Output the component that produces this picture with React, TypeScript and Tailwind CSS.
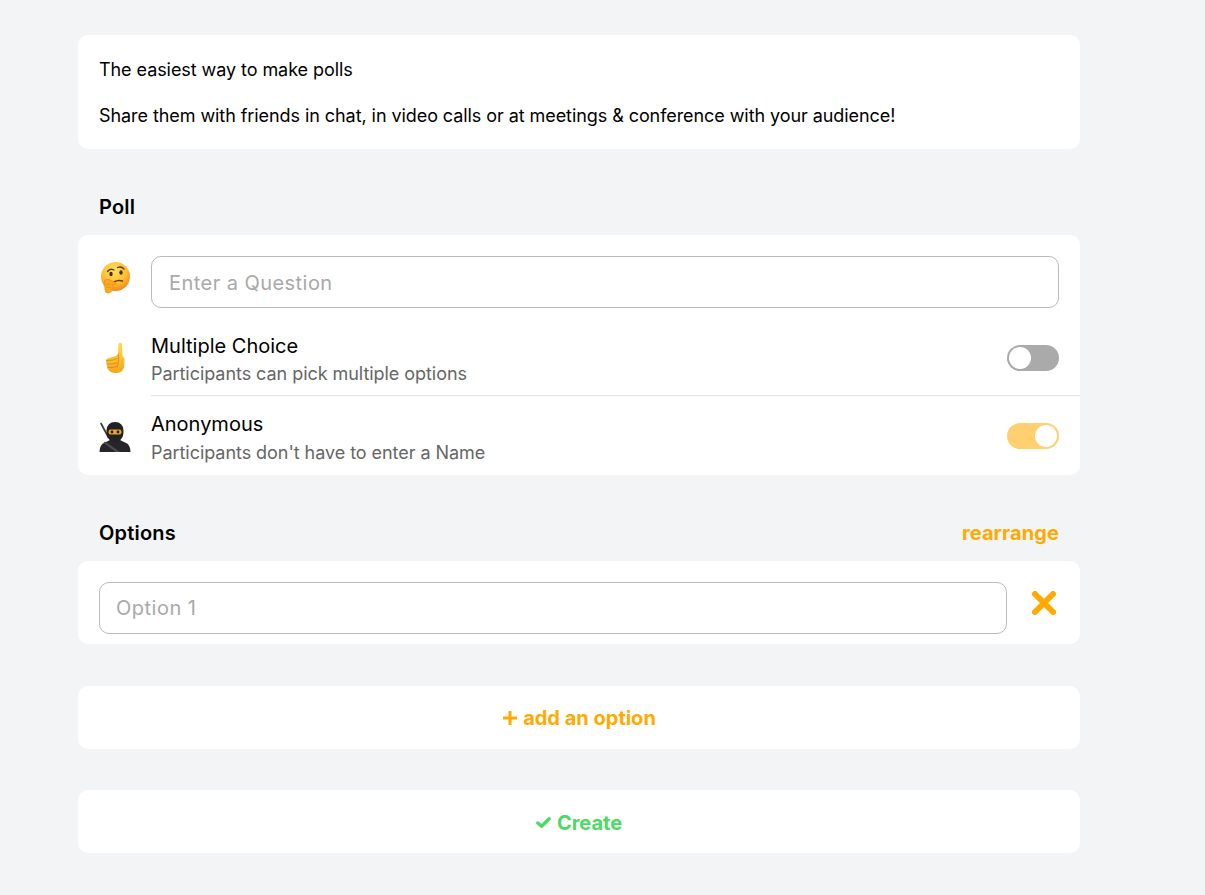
const ThinkingFace = () => (
  <svg viewBox="0 0 32 32" className="h-[32px] w-[32px]">
    <defs>
      <radialGradient id="think" cx="45%" cy="30%" r="75%">
        <stop offset="0%" stopColor="#ffe263" />
        <stop offset="60%" stopColor="#fdbb30" />
        <stop offset="100%" stopColor="#ec7f18" />
      </radialGradient>
    </defs>
    <circle cx="16.500" cy="14.500" r="14.500" fill="url(#think)" />
    <path d="M8.500 9.500q3-3.500 6.500-1.500" fill="none" stroke="#5f3a12" strokeWidth="1.300" strokeLinecap="round" />
    <path d="M18.500 5.500q4-1.500 6.500 1.500" fill="none" stroke="#5f3a12" strokeWidth="1.300" strokeLinecap="round" />
    <ellipse cx="12" cy="12" rx="1.700" ry="2.300" fill="#4a2c0f" />
    <ellipse cx="22" cy="10.500" rx="1.700" ry="2.300" fill="#4a2c0f" />
    <path d="M15 20q4-2.500 8.500-1" fill="none" stroke="#6b3f14" strokeWidth="1.500" strokeLinecap="round" />
    <path d="M5.500 18q3.500-1.500 7 .5l4.500 2.500q1.200 1-.5 1.500l-3-.3q1.200 2.800 0 5.800-1.500 3-4.300 3.200-3-.3-3.300-3.800z" fill="#f9a81f" stroke="#e88c15" strokeWidth=".6" />
    <path d="M7 22.500q2.500-.8 5 0M7.200 25.500q2.500-.6 5 .2" fill="none" stroke="#e88c15" strokeWidth=".7" />
  </svg>
);

const PointingUp = () => (
  <svg viewBox="0 0 32 32" className="h-[32px] w-[32px]">
    <defs>
      <linearGradient id="hand" x1="0" y1="0" x2="0" y2="1">
        <stop offset="0%" stopColor="#ffdc52" />
        <stop offset="100%" stopColor="#f6a51a" />
      </linearGradient>
    </defs>
    <path d="M19.500 1.500q2-1.500 3.500.5l.5 12q2 1 2 4l-.5 7q-1 5.500-7 6-7 .5-9.500-4.500l-1.500-7.500q-.2-2.200 2-2.700l7-2q2.500-.8 3-2.500z" fill="url(#hand)" />
    <path d="M7.500 18.500q6 .5 10.500-2M8 22q5.500.5 10-1.200M9 25.500q4.500.5 9-1M19.300 12l.2 5q.2 5-1.500 8" fill="none" stroke="#d98a12" strokeWidth=".9" strokeLinecap="round" />
  </svg>
);

const Ninja = () => (
  <svg viewBox="0 0 32 32" className="h-[32px] w-[32px]">
    <path d="M1 2.500l1.500-1 8 15-1.500 1z" fill="#3b3b3f" />
    <path d="M.500 31q.200-6.500 3.500-8.500l7-3.500h10l7 3.500q3.300 2 3.500 8.500z" fill="#26262a" />
    <path d="M6 20.500l15 10.500h-4L4.500 22z" fill="#4b4b50" />
    <path d="M16 1q8 0 8.500 8.500.3 6.500-3.200 9.500-2.500 2-5.300 2t-5.300-2q-3.500-3-3.200-9.500q.5-8.500 8.500-8.500z" fill="#232327" />
    <rect x="9.500" y="8.500" width="13" height="5" rx="2.200" fill="#e9a51f" />
    <circle cx="13" cy="11" r="1.400" fill="#2b1a08" />
    <circle cx="19" cy="11" r="1.400" fill="#2b1a08" />
  </svg>
);

function Toggle({ on }: { on?: boolean }) {
  return (
    <div
      className={
        on
          ? 'mb-[4px] flex h-[26px] w-[52px] shrink-0 items-center justify-end rounded-full bg-[#ffcf70] p-[2px]'
          : 'mb-[4px] flex h-[26px] w-[52px] shrink-0 items-center justify-start rounded-full bg-[#aaaaaa] p-[2px]'
      }
    >
      <div className="h-[22px] w-[22px] rounded-full bg-white" />
    </div>
  );
}

export default function App() {
  return (
    <main className="min-h-[895px] bg-[#f3f4f6] pl-[78px] pt-[35px] font-['Inter',sans-serif] text-black">
      <div className="w-[1002px]">
        <section className="rounded-[10px] bg-white px-[21px] pb-[22px] pt-[23px] text-[18px] leading-[23px] tracking-[-0.07px]">
          <p>The easiest way to make polls</p>
          <p className="mt-[23px]">Share them with friends in chat, in video calls or at meetings &amp; conference with your audience!</p>
        </section>

        <h2 className="mt-[46px] px-[21px] text-[20px] font-semibold leading-[24px] tracking-[0.2px]">Poll</h2>
        <section className="mt-[16px] rounded-[10px] bg-white pt-[21px]">
          <div className="flex items-center pl-[21px] pr-[21px]">
            <div className="flex w-[52px] shrink-0 pb-[9px]"><ThinkingFace /></div>
            <input
              placeholder="Enter a Question"
              className="h-[52px] w-full rounded-[10px] border border-[#bbbbbb] px-[17px] pt-[2px] text-[20px] tracking-[0.45px] outline-none placeholder:text-[#a9a9a9]"
            />
          </div>
          <div className="mt-[25px] flex pl-[21px]">
            <div className="flex w-[52px] shrink-0 items-center pb-[14px]"><PointingUp /></div>
            <div className="flex grow items-center justify-between border-b border-[#e2e2e2] pb-[9px] pr-[21px]">
              <div>
                <div className="text-[20px] leading-[27px]">Multiple Choice</div>
                <div className="mt-[2px] text-[18px] leading-[24px] tracking-[-0.05px] text-[#666666]">Participants can pick multiple options</div>
              </div>
              <Toggle />
            </div>
          </div>
          <div className="mt-[15px] flex pl-[21px]">
            <div className="flex w-[52px] shrink-0 items-center pb-[13px]"><Ninja /></div>
            <div className="flex grow items-center justify-between pb-[10px] pr-[21px]">
              <div>
                <div className="text-[20px] leading-[27px]">Anonymous</div>
                <div className="mt-[3px] text-[18px] leading-[24px] tracking-[-0.05px] text-[#666666]">Participants don't have to enter a Name</div>
              </div>
              <Toggle on />
            </div>
          </div>
        </section>

        <div className="mt-[46px] flex items-center justify-between px-[21px] text-[20px] font-semibold leading-[24px] tracking-[0.2px]">
          <h2>Options</h2>
          <button className="font-bold tracking-[0.1px] text-[#ffaa00]">rearrange</button>
        </div>
        <section className="mt-[16px] flex items-center rounded-[10px] bg-white pb-[10px] pl-[21px] pt-[21px]">
          <input
            placeholder="Option 1"
            className="h-[52px] w-[908px] rounded-[10px] border border-[#bbbbbb] px-[16px] text-[20px] tracking-[0.5px] outline-none placeholder:text-[#a9a9a9]"
          />
          <svg viewBox="0 0 24 24" className="mb-[10px] ml-[25px] h-[24px] w-[24px]" fill="none" stroke="#ffaa00" strokeWidth="6" strokeLinecap="round">
            <path d="M3 3l18 18M21 3L3 21" />
          </svg>
        </section>

        <button className="mt-[42px] flex h-[63px] w-full items-center justify-center gap-[5px] rounded-[10px] bg-white text-[20px] font-bold text-[#ffaa00]">
          <svg viewBox="0 0 16 16" className="h-[16px] w-[16px]" fill="none" stroke="#ffaa00" strokeWidth="3">
            <path d="M8 1v14M1 8h14" />
          </svg>
          add an option
        </button>

        <button className="mt-[41px] flex h-[63px] w-full items-center justify-center gap-[6px] rounded-[10px] bg-white pt-[2px] text-[20px] font-bold text-[#4cd964]">
          <svg viewBox="0 0 16 16" className="h-[15px] w-[15px]" fill="none" stroke="#4cd964" strokeWidth="3.600" strokeLinecap="round" strokeLinejoin="round">
            <path d="M2 8.500l4 3.500 8-8" />
          </svg>
          Create
        </button>
      </div>
    </main>
  );
}
